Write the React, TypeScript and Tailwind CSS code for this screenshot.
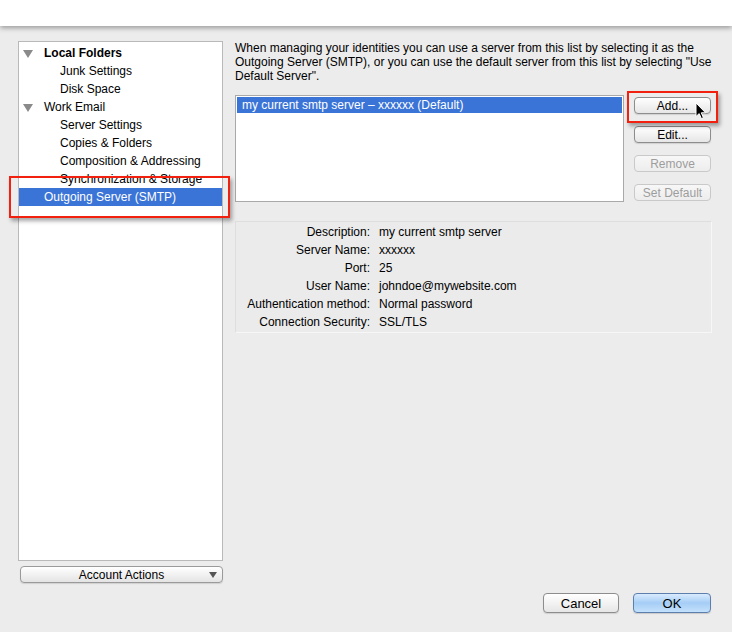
import React from 'react';
import clsx from 'clsx';

type TreeItem = { label: string; level: 0 | 1; bold?: boolean; open?: boolean; selected?: boolean };

const tree: TreeItem[] = [
  { label: 'Local Folders', level: 0, bold: true, open: true },
  { label: 'Junk Settings', level: 1 },
  { label: 'Disk Space', level: 1 },
  { label: 'Work Email', level: 0, open: true },
  { label: 'Server Settings', level: 1 },
  { label: 'Copies & Folders', level: 1 },
  { label: 'Composition & Addressing', level: 1 },
  { label: 'Synchronization & Storage', level: 1 },
  { label: 'Outgoing Server (SMTP)', level: 0, selected: true },
];

const details: [string, string][] = [
  ['Description:', 'my current smtp server'],
  ['Server Name:', 'xxxxxx'],
  ['Port:', '25'],
  ['User Name:', 'johndoe@mywebsite.com'],
  ['Authentication method:', 'Normal password'],
  ['Connection Security:', 'SSL/TLS'],
];

const Disclosure = () => (
  <svg width="10" height="8" viewBox="0 0 10 8" className="shrink-0">
    <polygon points="0,0 10,0 5,8" fill="#8a8a8a" />
  </svg>
);

// red callout frame drawn over a control
const Callout = ({ className }: { className: string }) => (
  <div
    className={clsx(
      'absolute pointer-events-none border-2 border-[#f2210f] shadow-[2px_3px_4px_rgba(0,0,0,0.35)]',
      className
    )}
  />
);

const MacButton: React.FC<{ children: React.ReactNode; disabled?: boolean }> = ({ children, disabled }) => (
  <button
    className={clsx(
      'block h-[17px] w-[77px] rounded-[4px] border text-[12px] leading-none bg-linear-to-b',
      disabled
        ? 'border-[#c9c9c9] text-[#9d9d9d] from-[#f7f7f7] to-[#ededed]'
        : 'border-[#8d8d8d] text-black from-white to-[#e6e6e6] shadow-[0_1px_1px_rgba(0,0,0,0.12)]'
    )}
  >
    {children}
  </button>
);

const Cursor = () => (
  <svg width="12" height="18" viewBox="0 0 12 18" className="absolute left-[61px] top-[5px] pointer-events-none">
    <path d="M1 1 L1 14.5 L4.2 11.6 L6.4 16.6 L8.4 15.7 L6.3 10.8 L10.6 10.8 Z" fill="#000" stroke="#fff" strokeWidth="1" strokeLinejoin="round" />
  </svg>
);

export default function App() {
  return (
    <div className="w-[732px] h-[632px] bg-[#ececec] overflow-hidden flex flex-col font-['Liberation_Sans',Arial,sans-serif] text-black">
      <div className="h-[26px] shrink-0 bg-white relative z-10 shadow-[0_2px_5px_rgba(0,0,0,0.35)]" />

      <div className="flex pt-[15px]">
        {/* account tree */}
        <div className="ml-[18px] w-[205px] flex flex-col">
          <div className="h-[520px] bg-white border border-[#b9b9b9] pt-[2px]">
            {tree.map((item) => (
              <div
                key={item.label}
                className={clsx(
                  'relative h-[18px] flex items-center text-[12px] whitespace-nowrap',
                  item.selected ? 'bg-[#3a74d7] text-white' : 'text-black',
                  item.level === 0 ? 'pl-[25px]' : 'pl-[41px]'
                )}
              >
                {item.open && (
                  <span className="absolute left-[4px] top-[6px]">
                    <Disclosure />
                  </span>
                )}
                <span className={clsx(item.bold && 'font-bold')}>{item.label}</span>
                {item.selected && <Callout className="-left-[10px] -right-[8px] -top-[12px] -bottom-[12px]" />}
              </div>
            ))}
          </div>
          <button className="mt-[5px] ml-[2px] h-[17px] w-[203px] relative rounded-[4px] border border-[#9a9a9a] bg-linear-to-b from-white to-[#e4e4e4] text-[12px] leading-none shadow-[0_1px_1px_rgba(0,0,0,0.12)]">
            Account Actions
            <svg width="8" height="6" viewBox="0 0 8 6" className="absolute right-[5px] top-[5px]">
              <polygon points="0,0 8,0 4,6" fill="#555" />
            </svg>
          </button>
        </div>

        {/* smtp settings */}
        <div className="ml-[12px] w-[477px] flex flex-col">
          <p className="text-[12px] leading-[14px] whitespace-nowrap">
            When managing your identities you can use a server from this list by selecting it as the
            <br />
            Outgoing Server (SMTP), or you can use the default server from this list by selecting "Use
            <br />
            Default Server".
          </p>

          <div className="mt-[12px] flex items-start gap-[10px]">
            <div className="w-[389px] h-[107px] bg-white border border-[#a9a9a9] p-px">
              <div className="h-[16px] bg-[#3a74d7] text-white text-[12px] flex items-center pl-[5px]">
                my current smtp server – xxxxxx (Default)
              </div>
            </div>
            <div className="flex flex-col gap-[12px] pt-[2px]">
              <div className="relative">
                <MacButton>Add...</MacButton>
                <Callout className="-left-[7px] -right-[7px] -top-[6px] -bottom-[9px]" />
                <Cursor />
              </div>
              <MacButton>Edit...</MacButton>
              <MacButton disabled>Remove</MacButton>
              <MacButton disabled>Set Default</MacButton>
            </div>
          </div>

          <div className="mt-[19px] border border-[#dedede] border-b-[#f7f7f7] border-r-[#f7f7f7] bg-[#ebebeb] py-px">
            {details.map(([k, v]) => (
              <div key={k} className="h-[18px] flex items-center text-[12px] whitespace-nowrap">
                <span className="w-[134px] text-right">{k}</span>
                <span className="ml-[9px]">{v}</span>
              </div>
            ))}
          </div>
        </div>
      </div>

      <div className="mt-[10px] flex justify-end gap-[14px] pr-[21px]">
        <button className="h-[20px] w-[76px] rounded-[4px] border border-[#8d8d8d] bg-linear-to-b from-white to-[#e6e6e6] text-[13px] leading-none shadow-[0_1px_1px_rgba(0,0,0,0.12)]">
          Cancel
        </button>
        <button className="h-[20px] w-[78px] rounded-[4px] border border-[#5d7fae] bg-linear-to-b from-[#d9ebfd] via-[#a5cdf6] to-[#c4e1fb] text-[13px] leading-none shadow-[0_1px_1px_rgba(0,0,0,0.15)]">
          OK
        </button>
      </div>
    </div>
  );
}
